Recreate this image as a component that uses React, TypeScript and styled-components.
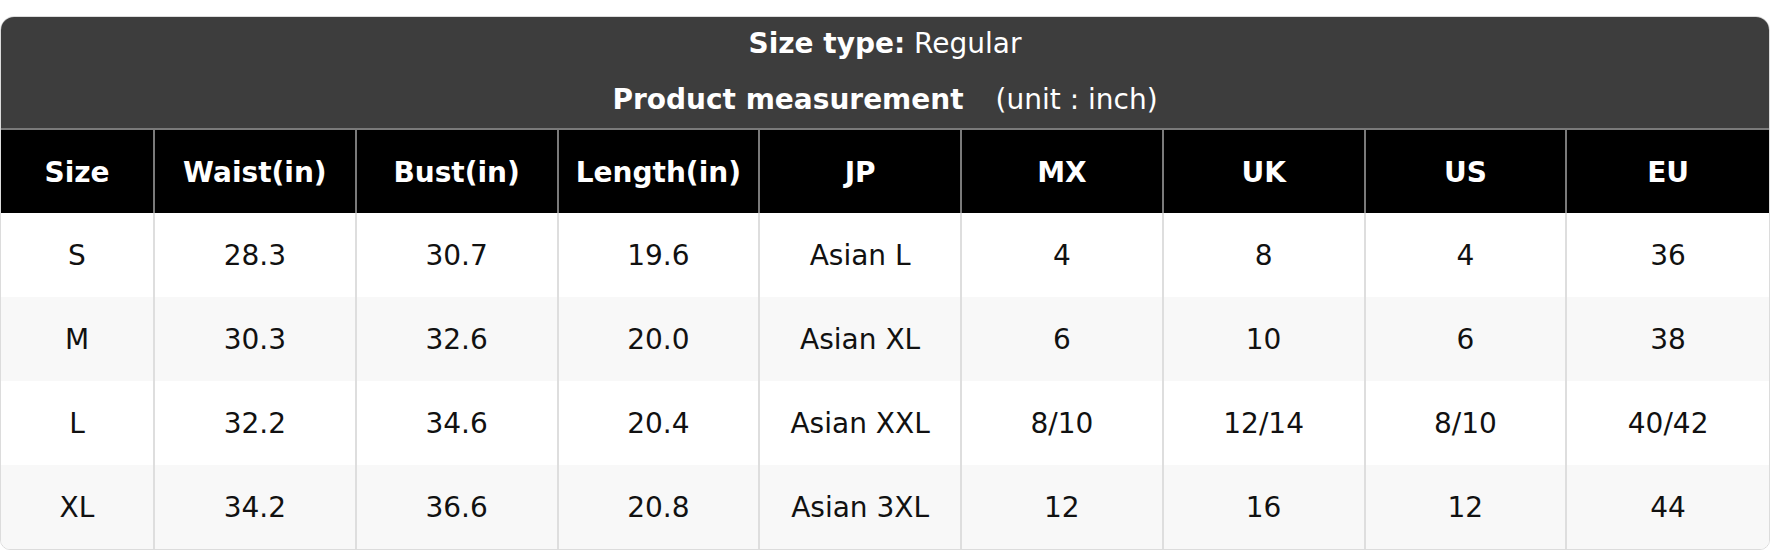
import React from "react";
import styled, { createGlobalStyle } from "styled-components";

const Global = createGlobalStyle`
  html, body { margin: 0; padding: 0; background: #ffffff; }
  body { font-family: "DejaVu Sans", Verdana, sans-serif; }
`;

const Page = styled.div`
  padding: 16px 0 2px;
`;

const Card = styled.div`
  border: 1px solid #dcdcdc;
  border-radius: 14px 14px 10px 10px;
  overflow: hidden;
  background: #fff;
`;

const Title = styled.div`
  background: #3d3d3d;
  color: #fff;
  font-size: 28px;
  text-align: center;
  padding: 12px 0 13px;
  border-bottom: 2px solid #7a7a7a;
`;

const TitleLine = styled.div<{ $gap?: boolean }>`
  line-height: 30px;
  margin-top: ${(p) => (p.$gap ? "26px" : "0")};
`;

const Strong = styled.b`
  font-weight: 700;
`;

const Unit = styled.span`
  margin-left: 32px;
`;

const Row = styled.div<{ $head?: boolean; $alt?: boolean }>`
  display: grid;
  grid-template-columns: 154px repeat(8, 1fr);
  height: ${(p) => (p.$head ? "83px" : "84px")};
  background: ${(p) => (p.$head ? "#000" : p.$alt ? "#f8f8f8" : "#fff")};
  color: ${(p) => (p.$head ? "#fff" : "#111")};
  font-weight: ${(p) => (p.$head ? 700 : 400)};
`;

const Cell = styled.div<{ $head?: boolean }>`
  display: flex;
  align-items: center;
  justify-content: center;
  padding-top: 1px;
  font-size: 28px;
  border-right: 2px solid ${(p) => (p.$head ? "#7a7a7a" : "#dedede")};
  &:last-child { border-right: none; }
`;

const headers = ["Size", "Waist(in)", "Bust(in)", "Length(in)", "JP", "MX", "UK", "US", "EU"];
const rows = [
  ["S", "28.3", "30.7", "19.6", "Asian L", "4", "8", "4", "36"],
  ["M", "30.3", "32.6", "20.0", "Asian XL", "6", "10", "6", "38"],
  ["L", "32.2", "34.6", "20.4", "Asian XXL", "8/10", "12/14", "8/10", "40/42"],
  ["XL", "34.2", "36.6", "20.8", "Asian 3XL", "12", "16", "12", "44"],
];

export default function App() {
  return (
    <>
      <Global />
      <Page>
        <Card>
          <Title>
            <TitleLine>
              <Strong>Size type:</Strong> Regular
            </TitleLine>
            <TitleLine $gap>
              <Strong>Product measurement</Strong>
              <Unit>(unit : inch)</Unit>
            </TitleLine>
          </Title>
          <Row $head>
            {headers.map((h) => (
              <Cell $head key={h}>{h}</Cell>
            ))}
          </Row>
          {rows.map((r, i) => (
            <Row key={r[0]} $alt={i % 2 === 1}>
              {r.map((c, j) => (
                <Cell key={j}>{c}</Cell>
              ))}
            </Row>
          ))}
        </Card>
      </Page>
    </>
  );
}
